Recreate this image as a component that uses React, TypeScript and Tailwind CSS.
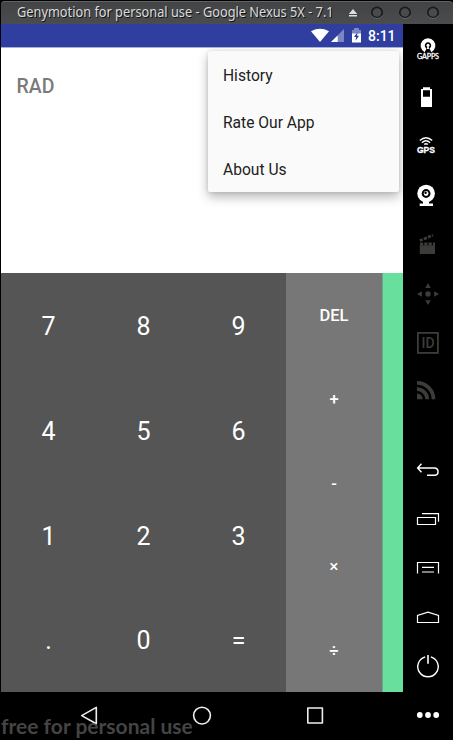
import React from "react";

const rows = [["7", "8", "9"], ["4", "5", "6"], ["1", "2", "3"], [".", "0", "="]];
const operators = ["DEL", "+", "-", "×", "÷"];

type SlotProps = { y: number; h: number; dim?: boolean; children: React.ReactNode };

// One toolbar cell; drawing coordinates are in window space.
function Slot({ y, h, dim, children }: SlotProps) {
  return (
    <svg
      viewBox={`403 ${y} 50 ${h}`}
      width={50}
      height={h}
      className={dim ? "block shrink-0 text-[#3c3c3a]" : "block shrink-0 text-white"}
      fill="none"
      stroke="currentColor"
      strokeWidth={1.2}
    >
      {children}
    </svg>
  );
}

function Sidebar() {
  return (
    <aside className="flex w-[50px] shrink-0 flex-col bg-black">
      <Slot y={24} h={48}>
        <path d="M425.6 50.3A5.3 5.3 0 1 1 430.4 50.3" strokeWidth="4.2" />
        <circle cx="428" cy="45.3" r="1.5" fill="currentColor" stroke="none" />
        <path d="M427.4 46h1.2l.4 3h-2z" fill="currentColor" stroke="none" />
        <text x="428" y="58.6" textAnchor="middle" textLength="22" className="font-[Lato] text-[7.2px]" fill="currentColor" stroke="currentColor" strokeWidth=".3">GAPPS</text>
      </Slot>
      <Slot y={72} h={49}>
        <path fillRule="evenodd" d="M423 87.3h7V89h2v18h-11V89h2zM423 90.3v6.4h7v-6.4z" fill="currentColor" stroke="none" />
      </Slot>
      <Slot y={121} h={49}>
        <path d="M419.8 140.5Q426 135 432.2 140.5M421.9 142.7Q426 139 430.1 142.7M424.2 144.5Q426 142.8 427.8 144.5" strokeWidth="1.4" />
        <text x="425.9" y="153.4" textAnchor="middle" textLength="18" lengthAdjust="spacingAndGlyphs" className="font-['Liberation_Sans'] text-[8.5px] font-bold" fill="currentColor" stroke="currentColor" strokeWidth=".3">GPS</text>
      </Slot>
      <Slot y={170} h={49}>
        <circle cx="426.1" cy="193.5" r="8.8" fill="currentColor" stroke="none" />
        <circle cx="426.1" cy="193.5" r="4.4" fill="black" stroke="none" />
        <circle cx="426.1" cy="193.5" r="2.4" fill="currentColor" stroke="none" />
        <circle cx="425.6" cy="192.8" r="1.2" fill="black" stroke="none" />
        <path d="M423 201h6v2.5h4v2.5h-13.3v-2.5h3.3z" fill="currentColor" stroke="none" />
      </Slot>
      <Slot y={219} h={49} dim>
        <path d="M419.8 245.3h15.2V254h-15.2z" fill="currentColor" stroke="none" />
        <path d="M420 244h15" strokeWidth="2.8" strokeDasharray="3.2 1.1" />
        <path d="M419.8 240.6L433 235.2" strokeWidth="2.7" strokeDasharray="3.2 1.2" />
      </Slot>
      <Slot y={268} h={49} dim>
        <circle cx="428" cy="294" r="2.7" fill="currentColor" stroke="none" />
        <path d="M428 283.2l2.8 4.7h-5.6zM428 305l2.8-4.7h-5.6zM417 294l4.8-2.8v5.6zM439 294l-4.8-2.8v5.6z" fill="currentColor" stroke="none" />
      </Slot>
      <Slot y={317} h={49} dim>
        <rect x="417.9" y="332.9" width="20" height="20" strokeWidth="1.8" />
        <text x="428" y="347.9" textAnchor="middle" textLength="13" lengthAdjust="spacingAndGlyphs" className="font-[Roboto] text-[14px] font-medium" fill="currentColor" stroke="none">ID</text>
      </Slot>
      <Slot y={366} h={49} dim>
        <path d="M417 393.6a5.7 5.7 0 0 1 5.7 5.7H417z" fill="currentColor" stroke="none" />
        <path d="M417 389.1A10.2 10.2 0 0 1 427.2 399.3M417 382.8A16.5 16.5 0 0 1 433.5 399.3" strokeWidth="3.7" />
      </Slot>
      <Slot y={415} h={80}>
        <path d="M421.5 463.8L417.6 468L421.5 472.2M417.6 468H435a3.7 3.7 0 0 1 0 7.3H427" strokeWidth="1.4" />
      </Slot>
      <Slot y={495} h={49}>
        <path d="M417.5 517.5h18v7h-18zM422 513.7h16.5v8" strokeWidth="1.2" />
      </Slot>
      <Slot y={544} h={49}>
        <path d="M417.5 573.5v-11h21v11" />
        <path d="M422 567.4h12M422 572h12" />
      </Slot>
      <Slot y={593} h={49}>
        <path d="M417.5 622.5v-7l10.5-3.3 10.5 3.3v7z" />
      </Slot>
      <Slot y={642} h={49}>
        <path d="M425.2 656.8a10.2 10.2 0 1 0 5.6 0" strokeWidth="1.4" />
        <path d="M428 655v8.8" strokeWidth="1.6" />
      </Slot>
      <Slot y={691} h={49}>
        <g fill="currentColor" stroke="none">
          <circle cx="419.8" cy="715" r="2.9" />
          <circle cx="428" cy="715" r="2.9" />
          <circle cx="436.2" cy="715" r="2.9" />
        </g>
      </Slot>
    </aside>
  );
}

function TitleBar() {
  return (
    <header className="flex h-6 items-center rounded-t-[4px] border-t border-l border-black bg-gradient-to-b from-[#424345] to-[#4b4c4e] pl-4 shadow-[inset_0_1px_0_#626365]">
      <span className="-mt-px w-[330px] shrink-0 origin-left scale-x-[0.912] text-[14px] leading-5 whitespace-nowrap text-[#dcdcdc] font-['Noto_Sans'] [text-shadow:1px_1px_0_#111]">
        Genymotion for personal use - Google Nexus 5X - 7.1
      </span>
      <svg viewBox="347 1 106 23" width="106" height="23" className="shrink-0">
        <path d="M348.8 14l4.2-5 4.2 5zM349 15h8v1.6h-8z" fill="#dedede" />
        {[377, 405, 433].map((x) => (
          <g key={x}>
            <circle cx={x} cy="12.5" r="5.2" fill="#4a4b4d" stroke="#1b1b1c" strokeWidth="1.7" />
            <path d={`M${x - 5.3} 15.5a6.1 6.1 0 0 0 10.6 0`} fill="none" stroke="#77797b" strokeWidth=".7" />
          </g>
        ))}
      </svg>
    </header>
  );
}

function StatusBar() {
  return (
    <div className="flex h-[23px] shrink-0 items-center justify-end bg-[#303f9f]">
      <svg viewBox="308 24 60 23" width="60" height="23">
        <path d="M311 31.2Q320 26.3 329 31.2L320 42z" fill="white" />
        <path d="M344 29v13h-13z" fill="#7c86c3" />
        <path d="M337.7 35.4V42H331z" fill="white" />
        <path d="M354.5 28.5h4V30h2.5v12.5h-9V30h2.5z" fill="white" />
        <path d="M354.5 28.5h4V30h2.5v3.6h-9V30h2.5z" fill="#7c86c3" />
        <path d="M357.6 32l-3.6 5h2.1l-.6 3.8 3.6-5h-2z" fill="#303f9f" />
      </svg>
      <span className="w-[35px] pt-[2px] text-[14px] font-medium text-white">8:11</span>
    </div>
  );
}

function Menu() {
  return (
    <div className="absolute top-[4px] right-[4px] w-[191px] rounded-[2px] bg-[#fafafa] shadow-[0_5px_11px_rgba(0,0,0,0.28),0_0_4px_rgba(0,0,0,0.12)]">
      {["History", "Rate Our App", "About Us"].map((item) => (
        <div key={item} className="flex h-[47px] items-center pt-[5px] pb-px pl-[15px] text-[15.6px] text-[#212121]">{item}</div>
      ))}
    </div>
  );
}

export default function App() {
  return (
    <div className="relative h-[740px] w-[453px] overflow-hidden bg-black font-[Roboto,sans-serif]">
      <TitleBar />
      <div className="flex h-[716px]">
        <main className="flex w-[403px] shrink-0 flex-col pl-px">
          <StatusBar />
          <section className="relative z-10 h-[226px] shrink-0 overflow-hidden border-t border-[#a7aed7] bg-white">
            <div className="pt-[27px] pl-[15.5px] text-[19.5px] leading-6 font-medium text-[#7b7b7b]">RAD</div>
            <div className="absolute inset-x-0 -top-px"><Menu /></div>
          </section>
          <section className="flex h-[419px] shrink-0">
            <div className="grid w-[285px] grid-cols-3 grid-rows-4 bg-[#555]">
              {rows.flat().map((key) => (
                <button key={key} className="flex items-center justify-center pt-[3px] text-[25px] text-white">{key}</button>
              ))}
            </div>
            <div className="grid w-[96px] grid-rows-5 bg-[#777]">
              {operators.map((key) => (
                <button key={key} className="flex items-center justify-center pt-[3px] text-[16.5px] font-medium text-white">{key}</button>
              ))}
            </div>
            <div className="w-[21px] border-l border-[#6fa889] bg-[#69df9d]" />
          </section>
          <nav className="relative h-12 shrink-0">
            <svg viewBox="1 692 402 48" width="402" height="48" fill="none" stroke="#eee" strokeWidth="1.6" strokeLinejoin="round">
              <path d="M81.7 715.6l14.6-8.2v16.4z" />
              <circle cx="202" cy="715.6" r="8.4" />
              <rect x="307.8" y="708" width="14.6" height="15" />
            </svg>
            <span className="absolute top-[22px] left-0 text-[21px] leading-6 font-bold whitespace-nowrap text-[#646464]/70 font-[Lato]">free for personal use</span>
          </nav>
        </main>
        <Sidebar />
      </div>
    </div>
  );
}
